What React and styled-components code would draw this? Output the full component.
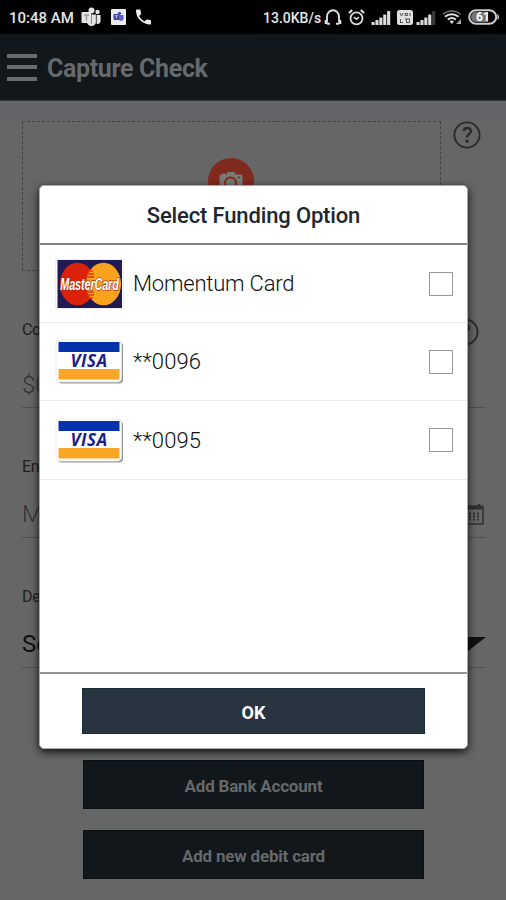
import React from "react";
import styled, { createGlobalStyle } from "styled-components";

const GlobalStyle = createGlobalStyle`
  * { box-sizing: border-box; }
  body { margin: 0; background: #666; font-family: Roboto, "Liberation Sans", sans-serif; }
  svg { display: block; flex: none; }
`;

const Screen = styled.div`
  position: relative;
  width: 506px;
  height: 900px;
  overflow: hidden;
  background: #666666;
`;

const StatusBar = styled.div`
  height: 34px;
  display: flex;
  justify-content: space-between;
  padding: 0 6px 0 9px;
  background: #000;
  color: #e6e6e6;
`;

const StatusGroup = styled.div`
  display: flex;
  align-items: center;
`;

const StatusIcons = styled.div`
  display: flex;
  align-items: center;
  gap: ${(p) => p.$gap}px;
`;

const StatusText = styled.span`
  width: ${(p) => p.$width}px;
  font-size: ${(p) => p.$size}px;
  line-height: 34px;
  padding-top: 1px;
  font-weight: 500;
  white-space: nowrap;
`;

const TitleBar = styled.header`
  height: 67px;
  display: flex;
  align-items: center;
  gap: 10px;
  padding: 0 7px;
  background: #11171b;
  border-bottom: 1px solid #30363a;
`;

const MenuIcon = styled.div`
  width: 30px;
  height: 27px;
  display: flex;
  flex-direction: column;
  justify-content: space-between;
`;

const MenuLine = styled.span`
  height: 4px;
  background: #696b6d;
`;

const PageTitle = styled.h1`
  margin: 0;
  padding-top: 4px;
  font-size: 25px;
  font-weight: 700;
  color: #66686a;
  line-height: 32px;
  letter-spacing: -0.35px;
`;

const Content = styled.main`
  height: 799px;
  padding: 20px 20px 0 22px;
  background: linear-gradient(#626468, #666666 24px);
`;

const CaptureRow = styled.div`
  display: flex;
  justify-content: space-between;
  align-items: flex-start;
  padding-right: 5px;
  height: 150px;
`;

const CaptureBox = styled.div`
  width: 419px;
  height: 150px;
  border: 1px dashed #444;
  display: flex;
  justify-content: center;
  padding: 36px 2px 0 0;
`;

const CameraButton = styled.div`
  width: 46px;
  height: 46px;
  border-radius: 50%;
  background: #80291f;
  display: flex;
  justify-content: center;
  padding-top: 13px;
`;

const Field = styled.div`
  height: ${(p) => p.$height}px;
  margin-top: ${(p) => p.$top || 0}px;
  border-bottom: 1px solid #505050;
  display: flex;
  flex-direction: column;
  justify-content: space-between;
`;

const FieldLine = styled.div`
  display: flex;
  align-items: center;
  justify-content: space-between;
  height: ${(p) => p.$height}px;
  padding-right: ${(p) => p.$right || 0}px;
`;

const FieldLabel = styled.span`
  font-size: 16px;
  line-height: 20px;
  padding-bottom: ${(p) => p.$lift || 0}px;
  letter-spacing: -0.3px;
  color: #202020;
`;

const FieldValue = styled.span`
  font-size: 24px;
  line-height: 28px;
  font-weight: ${(p) => (p.$strong ? 400 : 300)};
  color: ${(p) => (p.$strong ? "#101010" : "#333")};
`;

const PageActions = styled.div`
  display: flex;
  flex-direction: column;
  gap: 21px;
  margin: 92px 62px 0 61px;
`;

const Button = styled.button`
  display: block;
  width: ${(p) => (p.$primary ? 343 : 341)}px;
  height: ${(p) => (p.$primary ? 46 : 49)}px;
  padding: 2px 0 0;
  border: 1px solid ${(p) => (p.$primary ? "#172c3a" : "#0b1013")};
  border-radius: 0;
  background: ${(p) => (p.$primary ? "#283440" : "#11171a")};
  color: ${(p) => (p.$primary ? "#fff" : "#66686a")};
  font: 700 ${(p) => (p.$primary ? 18 : 17)}px Roboto, sans-serif;
  letter-spacing: ${(p) => (p.$primary ? 0 : -0.2)}px;
`;

const Dialog = styled.section`
  position: absolute;
  left: 39px;
  top: 185px;
  width: 429px;
  height: 564px;
  display: flex;
  flex-direction: column;
  background: #fff;
  border: 1px solid #aaa;
  border-radius: 5px;
  box-shadow: 0 3px 9px rgba(0, 0, 0, 0.85);
`;

const DialogTitle = styled.h2`
  margin: 0;
  height: 59px;
  border-bottom: 2px solid #858585;
  font-size: 22px;
  font-weight: 500;
  line-height: 60px;
  letter-spacing: -0.15px;
  text-align: center;
  color: #202630;
`;

const OptionList = styled.ul`
  flex: 1;
  margin: 0;
  padding: 0;
  list-style: none;
`;

const Option = styled.li`
  height: ${(p) => p.$height}px;
  display: flex;
  align-items: center;
  padding: 0 14px 0 15px;
  border-bottom: 1px solid #e8e8e8;
`;

const OptionLabel = styled.span`
  flex: 1;
  padding: 1px 0 0 9px;
  font-size: 22px;
  line-height: 30px;
  font-weight: 300;
  letter-spacing: ${(p) => p.$spacing}px;
  color: #101010;
`;

const Checkbox = styled.span`
  width: 24px;
  height: 24px;
  border: 1.5px solid #999;
  background: #fff;
`;

const DialogFooter = styled.footer`
  height: 76px;
  border-top: 2px solid #959595;
  padding: 14px 0 0 42px;
`;

const TeamsIcon = () => (
  <svg width="20" height="20" viewBox="0 0 20 20">
    <g fill="#e4e4e4">
      <circle cx="10.5" cy="3.5" r="3" />
      <circle cx="16.5" cy="5" r="2.2" />
      <path d="M6 7.5h9v7.5a4.5 4 0 0 1-9 0z" />
      <path d="M15.6 8h4v5.5c0 2.5-2 4-4 3.2z" />
      <rect x="0.5" y="5" width="9.5" height="11" rx="1" />
    </g>
    <path d="M3 8h5M5.5 8v5.5" stroke="#999" strokeWidth="1.4" />
    <path d="M10.5 7v10M15.2 8v7" stroke="#666" strokeWidth=".7" />
  </svg>
);

const TeamsBadgeIcon = () => (
  <svg width="15" height="16" viewBox="0 0 15 16">
    <rect width="15" height="16" rx="1" fill="#ecebf2" />
    <rect x="2.5" y="5" width="6" height="6" rx=".7" fill="#4045a8" />
    <circle cx="8.5" cy="4.3" r="1.6" fill="#4b50b5" />
    <path d="M8 6h4.5v3.2c0 3.5-4.5 3.2-4.5 1z" fill="#5d62c6" />
    <path d="M4 6.7h3M5.5 6.7v3" stroke="#ccd" strokeWidth=".8" />
  </svg>
);

const PhoneIcon = () => (
  <svg width="15" height="16" viewBox="0 0 18 18">
    <path
      fill="#eee"
      d="M3.6 7.8a15 15 0 0 0 6.6 6.6l2.2-2.2a1 1 0 0 1 1-.2c1.1.4 2.3.6 3.6.6a1 1 0 0 1 1 1V17a1 1 0 0 1-1 1A17 17 0 0 1 0 1a1 1 0 0 1 1-1h3.5a1 1 0 0 1 1 1c0 1.2.2 2.4.6 3.600a1 1 0 0 1-.2 1z"
    />
  </svg>
);

const HeadsetIcon = () => (
  <svg width="18" height="17" viewBox="0 0 18 17" fill="none" stroke="#ddd">
    <path d="M3 12.500V7.500a6 6.200 0 0 1 12 0v5" strokeWidth="1.900" />
    <path d="M2.200 11v4M15.800 11v4" strokeWidth="3" />
    <path d="M3 14.800h3M12 14.800h3" strokeWidth="2" />
  </svg>
);

const AlarmIcon = () => (
  <svg width="17" height="17" viewBox="0 0 17 17" fill="none" stroke="#ddd" strokeWidth="1.800">
    <circle cx="8.500" cy="9.300" r="6" />
    <path d="M1 4l3.200-3M16 4l-3.200-3" strokeWidth="2.200" />
    <path d="M5.800 8.200l2.700 2 2.500-2" strokeWidth="1.500" />
  </svg>
);

const SignalIcon = ({ dimLast }) => (
  <svg width="20" height="15" viewBox="0 0 20 15">
    {[3, 5, 7.5, 10.5, 14].map((h, i) => (
      <rect
        key={h}
        x={0.5 + i * 3.9}
        y={15 - h}
        width="3.1"
        height={h}
        rx=".6"
        fill={dimLast && i === 4 ? "#3a3a3a" : "#ddd"}
      />
    ))}
  </svg>
);

const VoLteIcon = () => (
  <svg width="16" height="15" viewBox="0 0 16 15">
    <rect width="16" height="15" rx="2.500" fill="#e0e0e0" />
    <path d="M3 3l1.500 3L6 3M8 3.500h2.500v2H8zM13 3v3M3.500 9v3.500M3 12.500h3M8 9h5M9.500 9v4M12.500 9v4M10 12.500h3" fill="none" stroke="#555" />
  </svg>
);

const WifiIcon = () => (
  <svg width="20" height="16" viewBox="0 0 20 16" fill="none">
    <path d="M1 5.300c5-4.500 12.500-4.500 17.500 0" stroke="#777" strokeWidth="1.500" />
    <path d="M3 7.800c4-3.500 9.500-3.500 13.500 0M5.800 10.600c2.500-2 5.400-2 8 0" stroke="#ddd" strokeWidth="2" />
    <path d="M7.500 12.300c1.500-1 3-1 4.500 0L9.800 15z" fill="#ddd" />
    <path d="M19 10v5h-5z" fill="#aaa" />
  </svg>
);

const BatteryIcon = () => (
  <svg width="32" height="16" viewBox="0 0 32 16">
    <rect x="1.200" y="1.200" width="27" height="13.600" rx="6.800" fill="none" stroke="#ccc" strokeWidth="2" />
    <path d="M8 3h12v10H8a5 5 0 0 1 0-10z" fill="#777" />
    <path d="M29.500 5c2 1 2 5 0 6z" fill="#ccc" />
    <text x="15" y="12.300" textAnchor="middle" fontFamily="Roboto, sans-serif" fontSize="12" fontWeight="700" fill="#fff">61</text>
  </svg>
);

const CameraIcon = () => (
  <svg width="24" height="20" viewBox="0 0 24 20">
    <path d="M3 2.500h3v1h1.500L8.500 1h7l1 2.500H22q1.500 0 1.500 2V19H.5V5.500q0-2 1.500-2h1z" fill="#777b76" />
    <circle cx="11.500" cy="12" r="5.500" fill="#777b76" stroke="#80291f" strokeWidth="2" />
    <path d="M18.500 6.500h2.500" stroke="#80291f" strokeWidth="1.500" />
  </svg>
);

const HelpIcon = () => (
  <svg width="28" height="28" viewBox="0 0 28 28" fill="none" stroke="#2b2b2b">
    <circle cx="14" cy="14" r="12.600" strokeWidth="1.900" />
    <path d="M10.700 10C11 8 12.300 7.100 14.200 7.100c2.200 0 3.600 1.200 3.600 3.100 0 2.800-3.700 2.700-3.700 6.400" strokeWidth="2.500" />
    <circle cx="14.100" cy="20.200" r="1.600" fill="#2b2b2b" stroke="none" />
  </svg>
);

const CalendarIcon = () => (
  <svg width="24" height="23" viewBox="0 0 24 23" fill="none" stroke="#303030">
    <rect x="1" y="3" width="22" height="18" rx="1" strokeWidth="1.500" />
    <path d="M1 5h22" strokeWidth="3" />
    <path d="M6 1v4M19 1v4" strokeWidth="2" />
    <path d="M5 10.500h15M5 13.500h15M5 16.500h15" strokeWidth="1.800" strokeDasharray="2 2" />
  </svg>
);

const CaretIcon = () => (
  <svg width="36" height="15" viewBox="0 0 36 15">
    <path d="M0 0h36L18 14z" fill="#101010" />
  </svg>
);

const MasterCardLogo = () => (
  <svg width="69" height="50" viewBox="0 0 69 50">
    <rect x=".5" y=".5" width="68" height="49" fill="#fff" stroke="#ddd" strokeDasharray="1 1" />
    <rect x="2.500" y="1" width="64.500" height="48" fill="#211b54" />
    <ellipse cx="22.500" cy="25" rx="17.500" ry="21.300" fill="#dc2109" />
    <ellipse cx="48.500" cy="25" rx="17.500" ry="21.300" fill="#f9a31c" />
    <path d="M33 12h5M32 15h7M31 18h8M31 33h8M32 36h7M33 39h5" stroke="#dc3b0b" strokeWidth="1.300" />
    <g transform="translate(34.500 30.500) scale(1 1.450)">
      <text
        textAnchor="middle"
        fontFamily="Liberation Sans, sans-serif"
        fontStyle="italic"
        fontWeight="700"
        fontSize="10.800"
        letterSpacing="-.1"
        fill="#fff"
        stroke="#a63a20"
        strokeWidth="1"
        paintOrder="stroke"
      >
        MasterCard
      </text>
    </g>
  </svg>
);

const VisaLogo = () => (
  <svg width="69" height="45" viewBox="0 0 69 45">
    <rect x="3" y="3" width="65" height="41.500" rx="4" fill="#999" />
    <rect x="1" y="1" width="65.500" height="42" rx="4" fill="#fff" stroke="#e4e4e4" strokeWidth=".7" />
    <rect x="3.500" y="3" width="61" height="10" fill="#0633ac" />
    <rect x="3.500" y="30" width="61" height="10.500" fill="#fba526" />
    <text x="34" y="27.500" textAnchor="middle" letterSpacing=".5" fontFamily="Open Sans, sans-serif" fontStyle="italic" fontWeight="700" fontSize="17" fill="#1b218b">VISA</text>
  </svg>
);

const options = [
  { label: "Momentum Card", logo: MasterCardLogo, height: 78, spacing: -0.2 },
  { label: "**0096", logo: VisaLogo, height: 78, spacing: 0.1 },
  { label: "**0095", logo: VisaLogo, height: 79, spacing: 0.1 },
];

export default function App() {
  return (
    <Screen>
      <GlobalStyle />
      <StatusBar>
        <StatusGroup>
          <StatusText $size={15} $width={72}>10:48 AM</StatusText>
          <StatusIcons $gap={10}>
            <TeamsIcon />
            <TeamsBadgeIcon />
            <PhoneIcon />
          </StatusIcons>
        </StatusGroup>
        <StatusGroup>
          <StatusText $size={14} $width={61}>13.0KB/s</StatusText>
          <StatusIcons $gap={6}>
            <HeadsetIcon />
            <AlarmIcon />
            <SignalIcon />
            <StatusIcons $gap={3}>
              <VoLteIcon />
              <SignalIcon dimLast />
            </StatusIcons>
            <WifiIcon />
            <BatteryIcon />
          </StatusIcons>
        </StatusGroup>
      </StatusBar>

      <TitleBar>
        <MenuIcon>
          <MenuLine />
          <MenuLine />
          <MenuLine />
        </MenuIcon>
        <PageTitle>Capture Check</PageTitle>
      </TitleBar>

      <Content>
        <CaptureRow>
          <CaptureBox>
            <CameraButton>
              <CameraIcon />
            </CameraButton>
          </CaptureBox>
          <HelpIcon />
        </CaptureRow>
        <Field $height={91} $top={46}>
          <FieldLine $height={29} $right={7}>
            <FieldLabel $lift={4}>Co</FieldLabel>
            <HelpIcon />
          </FieldLine>
          <FieldLine $height={45}>
            <FieldValue>$0</FieldValue>
          </FieldLine>
        </Field>
        <Field $height={83} $top={47}>
          <FieldLine $height={24}>
            <FieldLabel>En</FieldLabel>
          </FieldLine>
          <FieldLine $height={46} $right={2}>
            <FieldValue>M</FieldValue>
            <CalendarIcon />
          </FieldLine>
        </Field>
        <Field $height={83} $top={47}>
          <FieldLine $height={24}>
            <FieldLabel>De</FieldLabel>
          </FieldLine>
          <FieldLine $height={46}>
            <FieldValue $strong>Se</FieldValue>
            <CaretIcon />
          </FieldLine>
        </Field>
        <PageActions>
          <Button>Add Bank Account</Button>
          <Button>Add new debit card</Button>
        </PageActions>
      </Content>

      <Dialog>
        <DialogTitle>Select Funding Option</DialogTitle>
        <OptionList>
          {options.map(({ label, logo: Logo, height, spacing }) => (
            <Option key={label} $height={height}>
              <Logo />
              <OptionLabel $spacing={spacing}>{label}</OptionLabel>
              <Checkbox />
            </Option>
          ))}
        </OptionList>
        <DialogFooter>
          <Button $primary>OK</Button>
        </DialogFooter>
      </Dialog>
    </Screen>
  );
}
